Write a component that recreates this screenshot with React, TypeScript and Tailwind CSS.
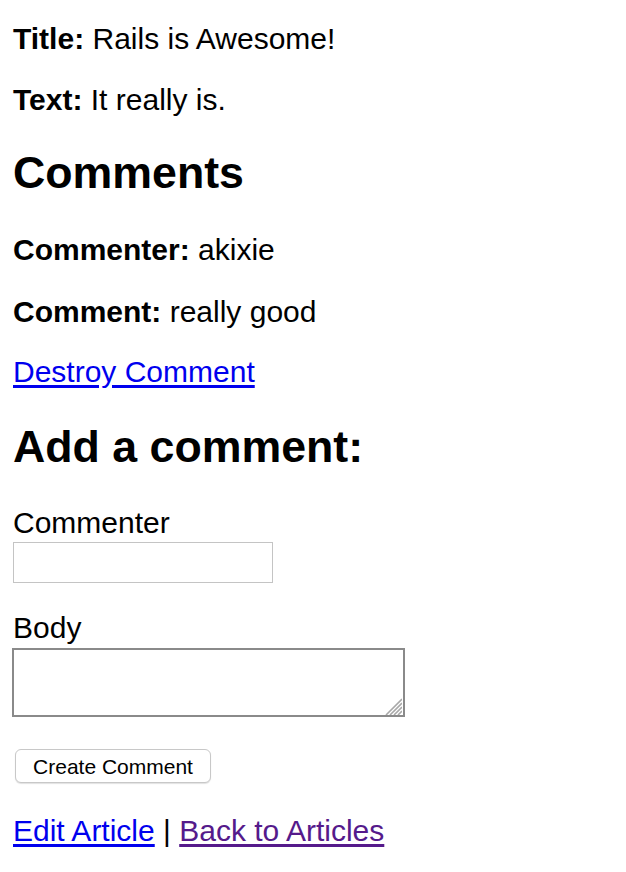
import React from 'react';

export default function App() {
  return (
    <div className="min-h-screen bg-white pl-[13px] pt-[22px] font-['Liberation_Sans',Arial,sans-serif] text-[30px] leading-[34px] text-black">
      <p>
        <strong className="font-bold">Title:</strong> Rails is Awesome!
      </p>
      <p className="mt-[27px]">
        <strong className="font-bold">Text:</strong> It really is.
      </p>

      <h2 className="mt-[31px] text-[44.7px] font-bold leading-[50px]">Comments</h2>
      <p className="mt-[35px]">
        <strong className="font-bold">Commenter:</strong> akixie
      </p>
      <p className="mt-[28px]">
        <strong className="font-bold">Comment:</strong> really good
      </p>
      <p className="mt-[26px]">
        <a href="#" className="text-[#0000ee] underline underline-offset-[3px]">
          Destroy Comment
        </a>
      </p>

      <h2 className="mt-[33px] text-[44.7px] font-bold leading-[50px]">Add a comment:</h2>
      <form className="flex flex-col items-start" onSubmit={(e) => e.preventDefault()}>
        <label className="mt-[34px]">Commenter</label>
        <input
          type="text"
          className="mt-[2px] h-[41px] w-[260px] border border-[#c4c4c4] bg-white px-1 text-[20px] outline-none"
        />

        <label className="mt-[28px]">Body</label>
        <div className="relative mt-[3px]">
          <textarea className="-ml-px block h-[69px] w-[393px] resize-none border-2 border-[#8a8a8a] bg-white text-[20px] outline-none" />
          {/* resize grip */}
          <svg
            className="pointer-events-none absolute bottom-[2px] right-[3px]"
            width="20"
            height="20"
            viewBox="0 0 20 20"
          >
            <g stroke="#a8a8a8" strokeWidth="1.6">
              <line x1="20" y1="4" x2="4" y2="20" />
              <line x1="20" y1="8" x2="8" y2="20" />
              <line x1="20" y1="12" x2="12" y2="20" />
              <line x1="20" y1="16" x2="16" y2="20" />
            </g>
          </svg>
        </div>

        <button
          type="submit"
          className="ml-[2px] mt-[32px] h-[34px] w-[196px] rounded-[6px] border border-[#c8c8c8] bg-white text-[21px] leading-none shadow-[0_1px_1px_rgba(0,0,0,0.12)]"
        >
          Create Comment
        </button>
      </form>

      <p className="mt-[31px]">
        <a href="#" className="text-[#0000ee] underline underline-offset-[3px]">
          Edit Article
        </a>{' '}
        |{' '}
        <a href="#" className="text-[#551a8b] underline underline-offset-[3px]">
          Back to Articles
        </a>
      </p>
    </div>
  );
}
